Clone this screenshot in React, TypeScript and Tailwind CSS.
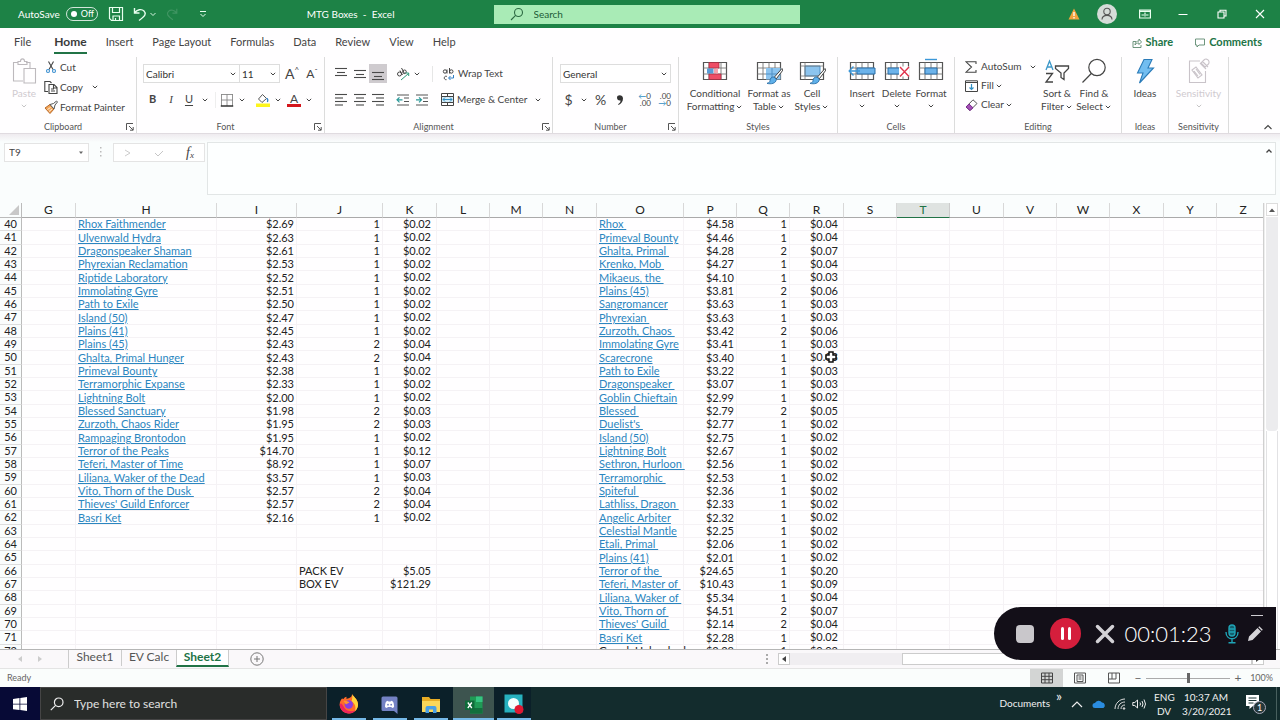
import React from "react";

type Kids = { children?: React.ReactNode };

/* ---------- small drawing helpers ---------- */

function Chev({ className = "" }: { className?: string }) {
  return (
    <svg aria-hidden="true" viewBox="0 0 8 8" className={`h-2 w-2 shrink-0 ${className}`} fill="none" stroke="#444" strokeWidth="1">
      <path d="M1.8 2.8 4 5l2.2-2.2" />
    </svg>
  );
}

function Btn({ label, className = "", children }: Kids & { label?: string; className?: string }) {
  return (
    <button type="button" aria-label={label} className={`flex shrink-0 items-center justify-center ${className}`}>
      {children}
    </button>
  );
}

function Drop({ label, className = "w-3.5" }: { label: string; className?: string }) {
  return (
    <Btn label={label} className={`h-full ${className}`}>
      <Chev />
    </Btn>
  );
}

function Lines({ rows }: { rows: [number, number, number][] }) {
  return (
    <svg aria-hidden="true" viewBox="0 0 14 14" className="h-3.5 w-3.5" stroke="#4a4a4a" strokeWidth="1.1">
      {rows.map(([x1, x2, y], i) => (
        <path key={i} d={`M${x1} ${y}H${x2}`} />
      ))}
    </svg>
  );
}

function Group({ name, launcher, className, children }: Kids & { name: string; launcher?: boolean; className: string }) {
  return (
    <section aria-label={name} className={`flex shrink-0 flex-col border-r border-[#dcdcdc] ${className}`}>
      <div className="flex flex-1">{children}</div>
      <div className="flex h-4 items-center pt-[3px] text-[9px] text-[#555]">
        <span className="flex-1 text-center">{name}</span>
        {launcher && (
          <Btn label={`${name} settings`} className="mr-0.5 h-3 w-2">
            <svg aria-hidden="true" viewBox="0 0 8 8" className="h-2 w-2" fill="none" stroke="#555">
              <path d="M.5 7V.5H7M3 3l4 4M7.2 4v3.2H4" />
            </svg>
          </Btn>
        )}
      </div>
    </section>
  );
}

function Big({ lines, chev, className, dim, children }: Kids & { lines: string[]; chev?: boolean; className: string; dim?: boolean }) {
  return (
    <button
      type="button"
      className={`flex shrink-0 flex-col items-center self-start whitespace-nowrap text-[10px] leading-[13px] ${dim ? "text-[#cfcacf]" : "text-[#444]"} ${className}`}
    >
      <span className="mb-[3px] flex h-[27px] items-center">{children}</span>
      {lines.map((l, i) => (
        <span key={l} className="flex items-center gap-px">
          {l}
          {chev && i > 0 && <Chev />}
        </span>
      ))}
      {chev && lines.length === 1 && <Chev className={dim ? "mt-0.5 opacity-30" : "mt-0.5"} />}
    </button>
  );
}

/* Small worksheet grid shared by the Styles and Cells icons */
function Sheet({ children, cols = true }: Kids & { cols?: boolean }) {
  return (
    <svg aria-hidden="true" viewBox="0 0 28 28" className="h-7 w-7" fill="none">
      <path d="M2.5 5.500h23v17h-23z" fill="#fff" stroke="#555" strokeWidth="1.200" />
      {cols && <path d="M8 5.500v17M14 5.500v17M20 5.500v17M2.500 11h23M2.500 17h23" stroke="#777" strokeWidth=".9" />}
      {children}
    </svg>
  );
}

function Brush() {
  return (
    <g>
      <path d="M27 11.500 19.500 20l1.800 1.800L28 13z" fill="#fff" stroke="#444" strokeWidth="1" />
      <path d="M19 20c-2.500-.2-4 1.500-4 3.500 0 1.500-1.200 2.500-3 2.800 4 1.200 9 .2 9.300-3.900z" fill="#5fb0ea" stroke="#2b6fa8" strokeWidth=".9" />
    </g>
  );
}

/* ---------- title bar ---------- */

function TitleBar() {
  return (
    <header className="flex h-7 shrink-0 items-center bg-[#1d8246] text-white">
      <div className="flex flex-1 items-center pl-[18px] text-[10px]">
        <span>AutoSave</span>
        <button type="button" role="switch" aria-checked="false" aria-label="AutoSave" className="ml-1.5 flex h-3.5 w-8 items-center gap-1 rounded-full border border-white/80 pl-1 text-[9px]">
          <span className="h-1.5 w-1.5 rounded-full bg-white" />
          Off
        </button>
        <Btn label="Save" className="ml-2.5">
          <svg aria-hidden="true" viewBox="0 0 16 16" className="h-4 w-4" fill="none" stroke="#e9fff0" strokeWidth="1.200">
            <path d="M1.500 1.500h13v13h-11l-2-2zM4.500 1.500v5h7v-5M5 14.500v-4.500h6.500v4.500M7.500 14.500v-2.500" />
          </svg>
        </Btn>
        <Btn label="Undo" className="ml-2">
          <svg aria-hidden="true" viewBox="0 0 16 16" className="h-4 w-4" fill="none" stroke="#e9fff0" strokeWidth="1.400">
            <path d="M2.500 2v5h5M2.500 7C5 3.500 9.500 2.500 12 5s1.500 5-5 9.500" />
          </svg>
        </Btn>
        <svg aria-hidden="true" viewBox="0 0 8 8" className="ml-px h-2 w-2" fill="none" stroke="#d5f5df">
          <path d="M1.500 3 4 5.500 6.500 3" />
        </svg>
        <Btn label="Redo" className="ml-2 opacity-15">
          <svg aria-hidden="true" viewBox="0 0 16 16" className="h-3.5 w-3.5" fill="none" stroke="#fff" strokeWidth="1.300">
            <path d="M13.500 2v5h-5M13.500 7C11 3.500 6.500 2.500 4 5s-1.500 5 5 9.500" />
          </svg>
        </Btn>
        <Btn label="Customize toolbar" className="ml-5">
          <svg aria-hidden="true" viewBox="0 0 8 8" className="h-2 w-2" fill="none" stroke="#e9fff0">
            <path d="M1 1.500h6M1.500 4 4 6.500 6.500 4" />
          </svg>
        </Btn>
        <span className="ml-auto mr-[89px] whitespace-pre">MTG Boxes  -  Excel</span>
      </div>
      <label className="ml-2.5 flex h-[19px] w-[306px] items-center bg-[#a9ebb6]">
        <svg aria-hidden="true" viewBox="0 0 14 14" className="ml-4 h-3.5 w-3.5" fill="none" stroke="#2c6a42" strokeWidth="1.100">
          <circle cx="8.500" cy="5.500" r="4" />
          <path d="M5.600 8.400 1 13" />
        </svg>
        <input aria-label="Search" placeholder="Search" className="ml-2.5 w-40 bg-transparent text-[10px] text-[#215c37] outline-none placeholder:text-[#215c37]" />
      </label>
      <div className="flex flex-1 items-center justify-end pr-[15px]">
        <svg aria-hidden="true" viewBox="0 0 12 12" className="mr-[17px] h-3 w-3">
          <path d="M6 .5 11.500 11.500H.5z" fill="#f3a33c" />
          <path d="M6 4v4M6 9v1.500" stroke="#fff" strokeWidth="1.300" />
        </svg>
        <Btn label="Account" className="mr-[22px] h-5 w-5 rounded-full bg-[#d5dcd8]">
          <svg aria-hidden="true" viewBox="0 0 16 16" className="h-4 w-4" fill="none" stroke="#555" strokeWidth="1.100">
            <circle cx="8" cy="5.500" r="3.200" />
            <path d="M3 13.500c.3-5.500 9.700-5.500 10 0" />
          </svg>
        </Btn>
        <Btn label="Ribbon display options" className="mr-[27px]">
          <svg aria-hidden="true" viewBox="0 0 12 10" className="h-2.5 w-3" fill="none" stroke="#eafff0" strokeWidth="1.200">
            <path d="M.6 1.200h10.800v7.800H.6zM.6 2.500h10.800M2.500 6h2.500M7 6h2.500M6 3.500v4" />
          </svg>
        </Btn>
        <Btn label="Minimize" className="mr-[29px]">
          <svg aria-hidden="true" viewBox="0 0 10 10" className="h-2.5 w-2.5" stroke="#fff">
            <path d="M.5 5.500h9" />
          </svg>
        </Btn>
        <Btn label="Restore" className="mr-7">
          <svg aria-hidden="true" viewBox="0 0 10 10" className="h-2.5 w-2.5" fill="none" stroke="#fff" strokeWidth="1.100">
            <path d="M1 3h6v6H1zM3 3V1.200h6V7H7" />
          </svg>
        </Btn>
        <Btn label="Close">
          <svg aria-hidden="true" viewBox="0 0 10 10" className="h-2.5 w-2.5" stroke="#fff" strokeWidth="1.100">
            <path d="m1 1 8 8M9 1 1 9" />
          </svg>
        </Btn>
      </div>
    </header>
  );
}

/* ---------- ribbon ---------- */

const TABS = ["File", "Home", "Insert", "Page Layout", "Formulas", "Data", "Review", "View", "Help"];

function Tabs() {
  return (
    <nav className="flex h-[29px] shrink-0 items-center text-[11px] text-[#444]">
      <div className="flex items-center gap-[19px] pl-3.5">
        {TABS.map((t) => (
          <button
            key={t}
            type="button"
            className={t === "Home" ? "ml-1 border-b-2 border-[#217346] text-[12px] font-bold leading-5 text-[#3a3a3a]" : "border-b-2 border-transparent leading-5"}
          >
            {t}
          </button>
        ))}
      </div>
      <div className="ml-auto flex items-center gap-[22px] pr-[18px] font-bold text-[#217346]">
        <button type="button" className="flex items-center gap-1">
          <svg aria-hidden="true" viewBox="0 0 10 10" className="h-2.5 w-2.5" fill="none" stroke="#5f8a70" strokeWidth=".9">
            <path d="M4 3.500H1v6h8V7M3 7c0-3 2-4 4-4V1l2.500 3L7 6.500V5C5 5 4 5.500 3 7z" />
          </svg>
          Share
        </button>
        <button type="button" className="flex items-center gap-1">
          <svg aria-hidden="true" viewBox="0 0 10 10" className="h-2.5 w-2.5" fill="none" stroke="#5f8a70" strokeWidth=".9">
            <path d="M.5 1h9v6H4L2 9V7H.5z" />
          </svg>
          Comments
        </button>
      </div>
    </nav>
  );
}

function Field({ label, value, className }: { label: string; value: string; className: string }) {
  return (
    <span className={`grid h-[19px] shrink-0 items-center border border-[#ddd] bg-white ${className}`}>
      <select aria-label={label} defaultValue={value} className="col-start-1 row-start-1 appearance-none bg-transparent pl-0.5 text-[10px] leading-4 text-[#333] outline-none">
        <option>{value}</option>
      </select>
      <Chev className="pointer-events-none col-start-1 row-start-1 mr-0.5 justify-self-end" />
    </span>
  );
}

function Ribbon() {
  return (
    <div className="flex h-[77px] shrink-0 border-b border-[#e0dbe0] text-[10px] text-[#444]">
      <Group name="Clipboard" launcher className="w-[137px]">
        <Big lines={["Paste"]} chev dim className="w-8 pl-4">
          <svg aria-hidden="true" viewBox="0 0 26 28" className="h-7 w-[26px]" fill="none" stroke="#bdb9bd" strokeWidth="1.100">
            <path d="M12 24H2.500V5.500H7M15 5.500h4V11M7 7.500V4.500h2.500c0-3.500 4-3.500 4 0H16v3zM13 11.500h11.500V26H13z" />
          </svg>
        </Big>
        <div className="flex flex-col pl-3">
          <Btn className="h-5 gap-0.5 self-start">
            <svg aria-hidden="true" viewBox="0 0 14 14" className="h-3.5 w-3.5" fill="none" strokeWidth="1.100">
              <path d="M4.500 1.500 9 9.500M9.500 1.500 5 9.500" stroke="#444" />
              <circle cx="4" cy="11" r="1.500" stroke="#3a8fd0" />
              <circle cx="10" cy="11" r="1.500" stroke="#3a8fd0" />
            </svg>
            Cut
          </Btn>
          <div className="flex h-5 items-center">
            <Btn className="gap-0.5">
              <svg aria-hidden="true" viewBox="0 0 14 14" className="h-3.5 w-3.5" fill="none" stroke="#444" strokeWidth="1.100">
                <path d="M4 11.500H.8V1.500H6l1.500 1.500M5 4.500h5l3 3v6H5zM9.500 4.800V8H13M7 9h3M7 11h4" />
              </svg>
              Copy
            </Btn>
            <Drop label="Copy options" className="ml-1.5 w-3" />
          </div>
          <Btn className="h-5 gap-0.5">
            <svg aria-hidden="true" viewBox="0 0 14 14" className="h-3.5 w-3.5">
              <path d="m1 8 5-3.500L10 9l-4 4.500z" fill="#f2a65a" stroke="#b8692a" />
              <path d="m6 4.500 3.500-1L12.500 1l1 1-2.500 3L10 9z" fill="#fff" stroke="#555" />
              <path d="m3.500 9.500 3-2M5 11.500l3-2.500" stroke="#fff" strokeWidth=".8" />
            </svg>
            Format Painter
          </Btn>
        </div>
      </Group>

      <Group name="Font" launcher className="w-[188px]">
        <div className="flex flex-col gap-[7px] pl-1.5 pt-[7px]">
          <div className="flex items-center">
            <Field label="Font" value="Calibri" className="w-[97px]" />
            <Field label="Font size" value="11" className="-ml-px w-[41px]" />
            <Btn label="Increase font size" className="ml-1 w-4 text-[14px] leading-4">
              A<span className="mb-2 text-[8px] leading-none">^</span>
            </Btn>
            <Btn label="Decrease font size" className="ml-1 w-4 text-[12px] leading-4">
              A<span className="mb-1 text-[8px] leading-none">ˇ</span>
            </Btn>
          </div>
          <div className="flex h-[19px] items-center text-[11px]">
            <Btn label="Bold" className="w-[19px] font-bold">B</Btn>
            <Btn label="Italic" className="w-[18px] font-['Liberation_Serif',serif] italic">I</Btn>
            <Btn label="Underline" className="w-[18px] underline underline-offset-2">U</Btn>
            <Drop label="Underline style" />
            <span className="mx-[3px] h-4 border-l border-[#eee]" />
            <Btn label="Borders" className="w-4">
              <svg aria-hidden="true" viewBox="0 0 14 14" className="h-3.5 w-3.5" fill="none">
                <path d="M1 1.500h12M1.500 1v12M12.500 1v12M7 1v12M1 7h12" stroke="#888" strokeWidth=".9" />
                <path d="M.8 13h12.400" stroke="#333" strokeWidth="1.500" />
              </svg>
            </Btn>
            <Drop label="Border style" />
            <Btn label="Fill color" className="ml-1.5 w-4">
              <svg aria-hidden="true" viewBox="0 0 14 14" className="h-3.5 w-3.5" fill="none">
                <path d="m2.500 6 4-4.500 4 4-4.500 4z" stroke="#555" />
                <path d="M10.500 5.500c1.500 0 1.500 2 .9 3.500" stroke="#2f7fc4" strokeWidth="1.300" />
                <path d="M0 10.500h14V14H0z" fill="#fdf51c" />
              </svg>
            </Btn>
            <Drop label="Fill color options" className="w-[13px]" />
            <Btn label="Font color" className="w-5 flex-col leading-none">
              <span className="text-[12px] leading-[11px]">A</span>
              <span className="h-[3px] w-3.5 bg-[#d4151c]" />
            </Btn>
            <Drop label="Font color options" className="w-2.5" />
          </div>
        </div>
      </Group>

      <Group name="Alignment" launcher className="w-[228px]">
        <div className="flex flex-col gap-[7px] pl-1.5 pt-[7px]">
          <div className="flex h-[19px] items-center">
            <Btn label="Top align" className="w-[19px]"><Lines rows={[[1, 13, 1.5], [3, 11, 5.5], [1, 13, 8.5]]} /></Btn>
            <Btn label="Middle align" className="w-[19px]"><Lines rows={[[1, 13, 3.5], [3, 11, 7.5], [1, 13, 10.5]]} /></Btn>
            <Btn label="Bottom align" className="h-[19px] w-[18px] bg-[#cfcbcf]"><Lines rows={[[1, 13, 5.5], [3, 11, 9.5], [1, 13, 12.5]]} /></Btn>
            <Btn label="Orientation" className="ml-2 w-4">
              <svg aria-hidden="true" viewBox="0 0 14 14" className="h-3.5 w-3.5" fill="none" stroke="#444">
                <circle cx="3.500" cy="7" r="2" />
                <path d="M4 3.500 6.500 8M5.500 1 8.500 6.500" />
                <circle cx="8.500" cy="4.800" r="1.800" />
                <path d="m5 13 7.500-6.500M9.500 6h3.200v3" stroke="#2b9a7b" />
              </svg>
            </Btn>
            <Drop label="Orientation options" className="w-3" />
            <span className="mx-[9px] h-4 border-l border-[#e6e6e6]" />
            <Btn className="gap-1">
              <svg aria-hidden="true" viewBox="0 0 12 14" className="h-3.5 w-3" fill="none" stroke="#444">
                <circle cx="3" cy="4.500" r="1.700" />
                <path d="M5 2.500v4M7.500 1v5.500M5 9.500c-3-1.500-4 3.500-.5 3.200" />
                <circle cx="9.300" cy="4.500" r="1.700" />
                <path d="M11.500 8v3H7M8.500 9 6.500 11l2 2" stroke="#2f7fc4" />
              </svg>
              Wrap Text
            </Btn>
          </div>
          <div className="flex h-[19px] items-center">
            <Btn label="Align left" className="w-[19px]"><Lines rows={[[1, 13, 1.5], [1, 9, 5], [1, 13, 8.5], [1, 9, 12]]} /></Btn>
            <Btn label="Center" className="w-[19px]"><Lines rows={[[1, 13, 1.5], [3, 11, 5], [1, 13, 8.5], [3, 11, 12]]} /></Btn>
            <Btn label="Align right" className="w-[18px]"><Lines rows={[[1, 13, 1.5], [5, 13, 5], [1, 13, 8.5], [5, 13, 12]]} /></Btn>
            <Btn label="Decrease indent" className="ml-1.5 w-[19px]">
              <svg aria-hidden="true" viewBox="0 0 14 14" className="h-3.5 w-3.5" fill="none" stroke="#555">
                <path d="M1 2h12M8 5h5M8 8.500h5M1 12h12" />
                <path d="M6.500 6.800H1M3.500 4.300 1 6.800l2.500 2.500" stroke="#2b9a9a" strokeWidth="1.200" />
              </svg>
            </Btn>
            <Btn label="Increase indent" className="w-[19px]">
              <svg aria-hidden="true" viewBox="0 0 14 14" className="h-3.5 w-3.5" fill="none" stroke="#555">
                <path d="M1 2h12M8 5h5M8 8.500h5M1 12h12" />
                <path d="M1 6.800h5.500M4 4.300l2.500 2.500L4 9.300" stroke="#2b9a9a" strokeWidth="1.200" />
              </svg>
            </Btn>
            <Btn className="ml-2.5 gap-[3px]">
              <svg aria-hidden="true" viewBox="0 0 13 13" className="h-[13px] w-[13px]" fill="none" stroke="#444">
                <path d="M.5.5h12v12H.5z" />
                <path d="M.5 3.500h12v6H.5z" fill="#d5ecf8" />
                <path d="M6.500.5v3M6.500 9.500v3" />
                <path d="M2 6.500h9M4 4.500l-2 2 2 2M9 4.500l2 2-2 2" stroke="#2f8fc4" />
              </svg>
              Merge &amp; Center
            </Btn>
            <Drop label="Merge options" className="ml-1 w-3.5" />
          </div>
        </div>
      </Group>

      <Group name="Number" launcher className="w-[126px]">
        <div className="flex flex-col gap-[7px] pl-[7px] pt-[7px]">
          <Field label="Number format" value="General" className="w-[111px]" />
          <div className="flex h-[19px] items-center text-[14px]">
            <Btn label="Accounting format" className="w-[17px]">$</Btn>
            <Drop label="Accounting options" />
            <Btn label="Percent style" className="ml-0.5 w-[15px]">%</Btn>
            <Btn label="Comma style" className="ml-[5px] w-3.5">
              <svg aria-hidden="true" viewBox="0 0 8 12" className="h-3 w-2">
                <path d="M1 3.500C1 .5 7 .3 7 4.500c0 3-2 5.500-4.500 6.500l-.4-.8C4 9 4.500 8 4.500 6.500 2.500 7 1 5.500 1 3.500z" fill="#333" />
              </svg>
            </Btn>
            <Btn label="Increase decimal" className="ml-2 w-4 flex-col text-[8px] leading-[7px]">
              <span className="self-end"><span className="text-[#2f8fc4]">←</span>0</span>
              <span className="self-end">.00</span>
            </Btn>
            <Btn label="Decrease decimal" className="ml-1 w-4 flex-col text-[8px] leading-[7px]">
              <span className="self-end">.00</span>
              <span className="self-end"><span className="text-[#2f8fc4]">→</span>0</span>
            </Btn>
          </div>
        </div>
      </Group>

      <Group name="Styles" className="w-[159px]">
        <Big lines={["Conditional", "Formatting"]} chev className="ml-1.5 w-[60px]">
          <Sheet>
            <path d="M8 5.500h10V11H8zM8 17h12v5.500H8z" fill="#ee4d66" stroke="#a5263c" strokeWidth=".7" />
            <path d="M6 11.500h6.500v5H6z" fill="#5b9bd5" />
            <path d="M13 11.500h4v5h-4z" fill="#f7a3ae" />
          </Sheet>
        </Big>
        <Big lines={["Format as", "Table"]} chev className="w-12">
          <Sheet>
            <path d="M11 11h14.500v11.500H11z" fill="#8cc4ef" />
            <path d="M17 11v11M11 17h14" stroke="#4e8fc4" />
            <Brush />
          </Sheet>
        </Big>
        <Big lines={["Cell", "Styles"]} chev className="w-[38px]">
          <Sheet cols={false}>
            <path d="M7 9h15v10H7z" fill="#8cc4ef" stroke="#4e8fc4" />
            <path d="M7 5.500v17M2.500 9h23M2.500 19h20" stroke="#777" strokeWidth=".8" />
            <Brush />
          </Sheet>
        </Big>
      </Group>

      <Group name="Cells" className="w-[117px]">
        <Big lines={["Insert"]} chev className="ml-[7px] w-[34px]">
          <Sheet>
            <path d="M9 11h18v6H9z" fill="#6cb3ea" stroke="#2b6fa8" />
            <path d="M12 14H1.500M5.500 9.500 1.200 14l4.300 4.500" stroke="#3b97d8" strokeWidth="1.400" />
          </Sheet>
        </Big>
        <Big lines={["Delete"]} chev className="w-[35px]">
          <Sheet>
            <path d="M5 11h13v6H5z" fill="#6cb3ea" stroke="#2b6fa8" />
            <path d="M16 9.500h10v10H16z" fill="#fff" />
            <path d="m17 10 9 9.500M26 10l-9 9.500" stroke="#e0364f" strokeWidth="1.400" />
          </Sheet>
        </Big>
        <Big lines={["Format"]} chev className="w-[34px]">
          <Sheet>
            <path d="M8 11h12v6H8z" fill="#6cb3ea" stroke="#2b6fa8" />
            <path d="M8 2.500h12" stroke="#3b97d8" strokeWidth="1.400" />
          </Sheet>
        </Big>
      </Group>

      <Group name="Editing" className="w-[167px]">
        <div className="flex w-[82px] flex-col pl-2.5">
          <div className="flex h-[19px] items-center">
            <Btn className="gap-1">
              <svg aria-hidden="true" viewBox="0 0 12 12" className="h-3 w-3" fill="none" stroke="#444" strokeWidth="1.100">
                <path d="M11 3V.8H1L6.500 6 1 11.200h10V9" />
              </svg>
              AutoSum
            </Btn>
            <Drop label="AutoSum options" className="ml-1.5 w-3" />
          </div>
          <Btn className="h-[19px] gap-[3px] self-start">
            <svg aria-hidden="true" viewBox="0 0 13 12" className="h-3 w-[13px]" fill="none" stroke="#444">
              <path d="M.5.8h12v10.700H.5zM.5 2.500h12" />
              <path d="M6.500 4v5.500M4.500 7.500l2 2 2-2" stroke="#2f8fc4" strokeWidth="1.200" />
            </svg>
            Fill
            <Chev className="-ml-0.5" />
          </Btn>
          <Btn className="h-[19px] gap-[3px] self-start">
            <svg aria-hidden="true" viewBox="0 0 13 12" className="h-3 w-[13px]" fill="none">
              <path d="M1 8 8 .8 12 4.500 5 11.500z" fill="#fff" stroke="#555" />
              <path d="m1 8 3-3 4 3.800-3 2.700z" fill="#a34fb5" stroke="#7b2f8e" />
            </svg>
            Clear
            <Chev className="-ml-0.5" />
          </Btn>
        </div>
        <Big lines={["Sort &", "Filter"]} chev className="w-10">
          <svg aria-hidden="true" viewBox="0 0 26 26" className="h-[26px] w-[26px]" fill="none" strokeWidth="1.300">
            <path d="M2 12 5.500 3 9 12M3.200 9h4.600" stroke="#3b97c8" />
            <path d="M2 15.500h6.500L2 24h7" stroke="#444" />
            <path d="M11.500 8h13v2.500L20 15v6.500l-3-2V15l-5.500-4.500z" stroke="#444" />
          </svg>
        </Big>
        <Big lines={["Find &", "Select"]} chev className="w-[34px]">
          <svg aria-hidden="true" viewBox="0 0 26 26" className="h-[26px] w-[26px]" fill="none" stroke="#444" strokeWidth="1.200">
            <circle cx="16" cy="9.500" r="8.200" />
            <path d="M10.300 15.500 1.500 24.500" />
          </svg>
        </Big>
      </Group>

      <Group name="Ideas" className="w-[47px]">
        <Big lines={["Ideas"]} className="w-[46px]">
          <svg aria-hidden="true" viewBox="0 0 20 26" className="h-[26px] w-5">
            <path d="M9 1.500h8L13 10h5.500L4.500 25l3.500-10H2.500z" fill="#72bdf0" stroke="#2b7bb8" strokeWidth="1.100" />
          </svg>
        </Big>
      </Group>

      <Group name="Sensitivity" className="w-[60px]">
        <Big lines={["Sensitivity"]} chev dim className="w-[59px]">
          <svg aria-hidden="true" viewBox="0 0 24 26" className="h-[26px] w-6" fill="none" stroke="#c9c3c9" strokeWidth="1.100">
            <path d="M13 3H2.500v21.500h16V13" />
            <path d="m5 12 4-3 6 8-4 3zM7 13l4 5M9 11l4 5.500M13 5l6 6M15.500 3.500 21 9M17 2c3-3 7 2 4 4.500l-3 2.500-4-4z" />
          </svg>
        </Big>
      </Group>
      <div className="flex flex-1 items-end justify-end pb-px pr-[7px]">
        <Btn label="Collapse ribbon">
          <svg aria-hidden="true" viewBox="0 0 10 10" className="h-2.5 w-2.5" fill="none" stroke="#444" strokeWidth="1.100">
            <path d="m1.500 7 3.500-3.500L8.500 7" />
          </svg>
        </Btn>
      </div>
    </div>
  );
}

function FormulaBar() {
  return (
    <div className="flex h-[69px] shrink-0 flex-col bg-[#fafdfd] text-[#444]">
      <div className="h-2 shrink-0 bg-linear-to-b from-[#efebef] to-[#fafdfd]" />
      <div className="flex flex-1 pb-2">
        <label className="ml-1 mt-px flex h-[19px] w-[85px] items-center border border-[#e4e4e4] bg-white px-1">
          <input aria-label="Name box" defaultValue="T9" className="min-w-0 flex-1 bg-transparent text-[10px] outline-none" />
          <svg aria-hidden="true" viewBox="0 0 6 4" className="h-1 w-1.5">
            <path d="M1 .5h4L3 3z" fill="#666" />
          </svg>
        </label>
        <svg aria-hidden="true" viewBox="0 0 4 12" className="ml-2.5 mt-1 h-3 w-1" fill="#bbb">
          <path d="M1 1h1.500v1.500H1zM1 5h1.500v1.500H1zM1 9h1.500v1.500H1z" />
        </svg>
        <div className="ml-2.5 mt-px flex h-[19px] w-[92px] items-center justify-between border border-[#e4e4e4] bg-white px-2.5">
          <Btn label="Cancel">
            <svg aria-hidden="true" viewBox="0 0 8 8" className="h-2 w-2" fill="none" stroke="#ccc"><path d="m1 1 5 3-5 3" /></svg>
          </Btn>
          <Btn label="Enter">
            <svg aria-hidden="true" viewBox="0 0 8 8" className="h-2 w-2" fill="none" stroke="#c6c6c6"><path d="m0 4 3 3 5-5" /></svg>
          </Btn>
          <Btn label="Insert function" className="font-['Liberation_Serif',serif] text-[14px] italic leading-4">
            f<span className="mt-1 text-[9px]">x</span>
          </Btn>
        </div>
        <div className="ml-0.5 mr-1 flex flex-1 items-start border border-[#e2e6e6] bg-[#fdffff]">
          <textarea aria-label="Formula" className="h-full flex-1 resize-none bg-transparent outline-none" />
          <Btn label="Collapse formula bar" className="mr-0.5 mt-1">
            <svg aria-hidden="true" viewBox="0 0 8 8" className="h-2 w-2" fill="none" stroke="#444" strokeWidth="1.300">
              <path d="M1.500 5.500 4 3l2.500 2.500" />
            </svg>
          </Btn>
        </div>
      </div>
    </div>
  );
}

/* ---------- worksheet ---------- */

const COLS: [string, string][] = [
  ["G", "w-[54px]"], ["H", "w-[141px]"], ["I", "w-[80px]"], ["J", "w-[86px]"], ["K", "w-[54px]"],
  ["L", "w-[53px]"], ["M", "w-[53px]"], ["N", "w-[54px]"], ["O", "w-[87px]"], ["P", "w-[53px]"],
  ["Q", "w-[53px]"], ["R", "w-[54px]"], ["S", "w-[53px]"], ["T", "w-[53px]"], ["U", "w-[54px]"],
  ["V", "w-[53px]"], ["W", "w-[53px]"], ["X", "w-[54px]"], ["Y", "w-[53px]"], ["Z", "w-[53px]"],
];

type Entry = [string, string, number, string];

const LEFT: Entry[] = [
  ["Rhox Faithmender", "$2.69", 1, "$0.02"],
  ["Ulvenwald Hydra", "$2.63", 1, "$0.02"],
  ["Dragonspeaker Shaman", "$2.61", 1, "$0.02"],
  ["Phyrexian Reclamation", "$2.53", 1, "$0.02"],
  ["Riptide Laboratory", "$2.52", 1, "$0.02"],
  ["Immolating Gyre", "$2.51", 1, "$0.02"],
  ["Path to Exile", "$2.50", 1, "$0.02"],
  ["Island (50)", "$2.47", 1, "$0.02"],
  ["Plains (41)", "$2.45", 1, "$0.02"],
  ["Plains (45)", "$2.43", 2, "$0.04"],
  ["Ghalta, Primal Hunger", "$2.43", 2, "$0.04"],
  ["Primeval Bounty", "$2.38", 1, "$0.02"],
  ["Terramorphic Expanse", "$2.33", 1, "$0.02"],
  ["Lightning Bolt", "$2.00", 1, "$0.02"],
  ["Blessed Sanctuary", "$1.98", 2, "$0.03"],
  ["Zurzoth, Chaos Rider", "$1.95", 2, "$0.03"],
  ["Rampaging Brontodon", "$1.95", 1, "$0.02"],
  ["Terror of the Peaks", "$14.70", 1, "$0.12"],
  ["Teferi, Master of Time", "$8.92", 1, "$0.07"],
  ["Liliana, Waker of the Dead", "$3.57", 1, "$0.03"],
  ["Vito, Thorn of the Dusk ", "$2.57", 2, "$0.04"],
  ["Thieves' Guild Enforcer", "$2.57", 2, "$0.04"],
  ["Basri Ket", "$2.16", 1, "$0.02"],
];

const RIGHT: Entry[] = [
  ["Rhox ", "$4.58", 1, "$0.04"],
  ["Primeval Bounty", "$4.46", 1, "$0.04"],
  ["Ghalta, Primal ", "$4.28", 2, "$0.07"],
  ["Krenko, Mob ", "$4.27", 1, "$0.04"],
  ["Mikaeus, the ", "$4.10", 1, "$0.03"],
  ["Plains (45)", "$3.81", 2, "$0.06"],
  ["Sangromancer", "$3.63", 1, "$0.03"],
  ["Phyrexian ", "$3.63", 1, "$0.03"],
  ["Zurzoth, Chaos ", "$3.42", 2, "$0.06"],
  ["Immolating Gyre", "$3.41", 1, "$0.03"],
  ["Scarecrone", "$3.40", 1, "$0.03"],
  ["Path to Exile", "$3.22", 1, "$0.03"],
  ["Dragonspeaker ", "$3.07", 1, "$0.03"],
  ["Goblin Chieftain", "$2.99", 1, "$0.02"],
  ["Blessed ", "$2.79", 2, "$0.05"],
  ["Duelist's ", "$2.77", 1, "$0.02"],
  ["Island (50)", "$2.75", 1, "$0.02"],
  ["Lightning Bolt", "$2.67", 1, "$0.02"],
  ["Sethron, Hurloon ", "$2.56", 1, "$0.02"],
  ["Terramorphic ", "$2.53", 1, "$0.02"],
  ["Spiteful ", "$2.36", 1, "$0.02"],
  ["Lathliss, Dragon ", "$2.33", 1, "$0.02"],
  ["Angelic Arbiter", "$2.32", 1, "$0.02"],
  ["Celestial Mantle", "$2.25", 1, "$0.02"],
  ["Etali, Primal ", "$2.06", 1, "$0.02"],
  ["Plains (41)", "$2.01", 1, "$0.02"],
  ["Terror of the ", "$24.65", 1, "$0.20"],
  ["Teferi, Master of ", "$10.43", 1, "$0.09"],
  ["Liliana, Waker of ", "$5.34", 1, "$0.04"],
  ["Vito, Thorn of ", "$4.51", 2, "$0.07"],
  ["Thieves' Guild ", "$2.14", 2, "$0.04"],
  ["Basri Ket", "$2.28", 1, "$0.02"],
  ["Garruk Unleashed", "$2.28", 1, "$0.02"],
];

const CELL = "whitespace-pre border-b border-r border-[#f5f2f5] p-0";

function cellOf(col: string, i: number) {
  const l = LEFT[i];
  const r = RIGHT[i];
  const link = (t: string) =>
    t.startsWith("Garruk") ? t : (
      <a href="#card" className="text-[#2b86c0] underline decoration-1 underline-offset-1">{t}</a>
    );
  switch (col) {
    case "H": return l && link(l[0]);
    case "I": return l?.[1];
    case "J": return l ? l[2] : i === 26 ? "PACK EV" : i === 27 ? "BOX EV" : null;
    case "K": return l ? l[3] : i === 26 ? "$5.05" : i === 27 ? "$121.29" : null;
    case "O": return link(r[0]);
    case "P": return r[1];
    case "Q": return r[2];
    case "R": return r[3];
    default: return null;
  }
}

function cellAlign(col: string, i: number) {
  if (col === "K" || col === "R") return "pr-[5px] text-right align-top";
  if (col === "J" && i >= 26) return "pl-0.5 text-left align-top";
  if (col === "H" || col === "O") return "pl-0.5 text-left align-bottom";
  return "pr-0.5 text-right align-bottom";
}

function Grid() {
  return (
    <div className="flex min-h-0 flex-1 overflow-hidden bg-[#fafdfd]">
      <div className="min-w-0 flex-1 overflow-hidden border-r border-[#d0d0d0]">
        <table className="w-[1266px] table-fixed border-separate border-spacing-0 bg-[#fffeff] text-[11px] leading-3 text-[#222]">
          <colgroup>
            <col className="w-[22px]" />
            {COLS.map(([c, w]) => (
              <col key={c} className={w} />
            ))}
          </colgroup>
          <thead>
            <tr className="h-[15px] text-[12px]">
              <th className="border-b border-r border-[#bbb] bg-[#fafdfd] p-0">
                <svg aria-hidden="true" viewBox="0 0 10 10" className="ml-auto mr-0.5 h-2.5 w-2.5">
                  <path d="M10 0v10H0z" fill="#c8c8c8" />
                </svg>
              </th>
              {COLS.map(([c]) => (
                <th
                  key={c}
                  scope="col"
                  className={`border-b border-r p-0 font-normal ${c === "T" ? "border-b-[#217346] border-r-[#ccc] bg-[#dfe3e1] text-[#217346]" : "border-b-[#aaa] border-r-[#d8d8d8] bg-[#fafdfd]"}`}
                >
                  {c}
                </th>
              ))}
            </tr>
          </thead>
          <tbody>
            {RIGHT.map((_, i) => (
              <tr key={i} className={i % 3 === 1 ? "h-3.5" : "h-[13px]"}>
                <th scope="row" className="border-b border-r border-b-[#ddd] border-r-[#bbb] bg-[#fafdfd] p-0 pr-1 text-right align-top font-normal">
                  {40 + i}
                </th>
                {COLS.map(([c]) => (
                  <td key={c} className={`${CELL} ${cellAlign(c, i)}`}>{cellOf(c, i)}</td>
                ))}
              </tr>
            ))}
          </tbody>
        </table>
      </div>
      <div className="flex w-4 flex-col items-center border-l border-[#eee] bg-white pr-px">
        <Btn label="Scroll up" className="h-[13px] w-3 border border-[#ddd] bg-white">
          <svg aria-hidden="true" viewBox="0 0 6 4" className="h-1 w-1.5"><path d="M0 4h6L3 .5z" fill="#555" /></svg>
        </Btn>
        <div className="mt-px h-[48%] w-3 rounded-b-sm bg-[#ececee]" />
        <div className="w-3 flex-1 border-x border-[#e2e2e4]" />
      </div>
    </div>
  );
}

function SheetTabs() {
  return (
    <div className="flex h-5 shrink-0 border-b border-t border-b-[#e4e4e4] border-t-[#b5b5b5] bg-[#faf8fa] text-[12px] text-[#555]">
      <div className="flex w-[69px] items-center gap-4 border-r border-[#ccc] pl-[18px]">
        <Btn label="Previous sheet"><svg aria-hidden="true" viewBox="0 0 4 6" className="h-1.5 w-1"><path d="M4 0v6L0 3z" fill="#ccc" /></svg></Btn>
        <Btn label="Next sheet"><svg aria-hidden="true" viewBox="0 0 4 6" className="h-1.5 w-1"><path d="M0 0v6l4-3z" fill="#ccc" /></svg></Btn>
      </div>
      <button type="button" className="w-[53px] self-start border-r border-[#ccc] pb-0.5 leading-[14px]">Sheet1</button>
      <button type="button" className="w-[54px] self-start pb-0.5 leading-[14px]">EV Calc</button>
      <button type="button" className="w-[53px] self-start border-x border-b-2 border-x-[#ccc] border-b-[#217346] bg-white pb-px font-bold leading-[14px] text-[#217346]">Sheet2</button>
      <Btn label="New sheet" className="ml-[21px]">
        <svg aria-hidden="true" viewBox="0 0 14 14" className="h-3.5 w-3.5" fill="none" stroke="#777">
          <circle cx="7" cy="7" r="6.200" />
          <path d="M7 4v6M4 7h6" />
        </svg>
      </Btn>
      <div className="ml-auto flex w-[514px] items-center">
        <svg aria-hidden="true" viewBox="0 0 2 10" className="h-2.5 w-0.5" fill="#aaa"><path d="M0 0h2v2H0zM0 4h2v2H0zM0 8h2v2H0z" /></svg>
        <Btn label="Scroll left" className="ml-2.5 h-3 w-3 border border-[#ccc] bg-white">
          <svg aria-hidden="true" viewBox="0 0 4 6" className="h-1.5 w-1"><path d="M4 0v6L0 3z" fill="#444" /></svg>
        </Btn>
        <div className="h-3 flex-1 bg-[#f0eef1]" />
        <div className="h-3 w-[350px] border border-[#ccc] bg-white" />
        <Btn label="Scroll right" className="mr-4 h-3 w-3 border border-[#ccc] bg-white">
          <svg aria-hidden="true" viewBox="0 0 4 6" className="h-1.5 w-1"><path d="M0 0v6l4-3z" fill="#444" /></svg>
        </Btn>
      </div>
    </div>
  );
}

function StatusBar() {
  return (
    <footer className="flex h-[18px] shrink-0 items-center bg-[#fafdfc] text-[9px] text-[#666]">
      <span className="pl-[7px]">Ready</span>
      <div className="ml-auto flex h-full items-center">
        <Btn label="Normal view" className="h-full w-[33px] bg-[#d3d5d4]">
          <svg aria-hidden="true" viewBox="0 0 12 12" className="h-3 w-3" fill="none" stroke="#444"><path d="M.5 1h11v10H.5zM4 1v10M8 1v10M.5 4.300h11M.5 7.700h11" /></svg>
        </Btn>
        <Btn label="Page layout view" className="h-full w-[34px]">
          <svg aria-hidden="true" viewBox="0 0 12 12" className="h-3 w-3" fill="none" stroke="#555"><path d="M.5 1h11v10H.5zM3 3h6v6.500H3zM4.500 5h3M4.500 7h3" /></svg>
        </Btn>
        <Btn label="Page break view" className="h-full w-[33px]">
          <svg aria-hidden="true" viewBox="0 0 12 12" className="h-3 w-3" fill="none" stroke="#555"><path d="M.5 1h11v10H.5zM4 1v6M8 1v6M.5 7H8" /></svg>
        </Btn>
        <Btn label="Zoom out" className="w-4 text-[12px]">−</Btn>
        <label className="grid w-[84px] items-center">
          <span aria-hidden="true" className="col-start-1 row-start-1 h-px bg-[#aaa]" />
          <span aria-hidden="true" className="col-start-1 row-start-1 h-2.5 w-[3px] justify-self-center bg-[#666]" />
          <input type="range" aria-label="Zoom" className="col-start-1 row-start-1 h-3 w-full opacity-0" />
        </label>
        <Btn label="Zoom in" className="w-4 text-[12px]">+</Btn>
        <span className="w-[34px] pr-[7px] text-right">100%</span>
      </div>
    </footer>
  );
}

/* ---------- desktop taskbar ---------- */

function TaskButton({ label, active, className = "w-[34px]", children }: Kids & { label: string; active?: boolean; className?: string }) {
  return (
    <button type="button" aria-label={label} className={`flex h-full flex-col items-center justify-end border-b-2 border-[#76b9e8] pb-1 ${active ? "bg-[#3d544f]" : ""} ${className}`}>
      {children}
    </button>
  );
}

function Taskbar() {
  return (
    <div className="flex h-[33px] shrink-0 items-center bg-[#132c2d] text-[#f0f0f0]">
      <Btn label="Start" className="h-full w-10 bg-[#070a36]">
        <svg aria-hidden="true" viewBox="0 0 14 14" className="h-3.5 w-3.5" fill="#fff">
          <path d="M0 2 6.500 1v5.700H0zM7.300.9 14 0v6.700H7.300zM0 7.500h6.500v5.600L0 12.200zM7.300 7.500H14V14l-6.700-.9z" />
        </svg>
      </Btn>
      <label className="flex h-full w-[287px] items-center border border-[#454545] bg-[#292c2a] pl-[9px]">
        <svg aria-hidden="true" viewBox="0 0 14 14" className="h-3.5 w-3.5" fill="none" stroke="#eee" strokeWidth="1.200">
          <circle cx="8.700" cy="5.300" r="4.300" />
          <path d="M5.600 8.400.8 13.200" />
        </svg>
        <input aria-label="Type here to search" placeholder="Type here to search" className="ml-2.5 w-52 bg-transparent text-[12px] outline-none placeholder:text-[#e0e0e0]" />
      </label>
      <div className="flex h-full gap-[7px] bg-[#0b2029] pl-[5px]">
        <TaskButton label="Firefox">
          <svg aria-hidden="true" viewBox="0 0 20 20" className="h-5 w-5">
            <path d="M13 0c1 2.500 5.500 4.500 6 10 .3 5-4 9.500-9 9.500S.7 15.500.7 10.500C.7 8 1.500 6 3 4.500L4.500 5c1-1.500 2-2 3-2.200L7.500 5C11 4 13 3 13 0z" fill="#ff6a2b" />
            <path d="M13 0c1 2.500 5.500 4.500 6 10 .2 3-1 5.500-3 7.300 1.500-5-.5-8-3.500-10C13.500 5 13.500 2 13 0z" fill="#ffd43a" />
            <path d="M.7 10.500c0 5 4.300 9 9.300 9 3 0 5-1 6.500-3-3 1.500-9 1-11-2.500S2 8 .7 10.500z" fill="#f0245b" />
            <circle cx="9.800" cy="10.500" r="4.200" fill="#8a3ee0" />
            <path d="M4.500 7c2-1 4 .5 6 1-1 1.500-3 1.500-3.500 2.500z" fill="#ff9a2b" />
          </svg>
        </TaskButton>
        <TaskButton label="Discord">
          <svg aria-hidden="true" viewBox="0 0 18 18" className="h-[18px] w-[18px]">
            <path d="M2 .5h13A1.500 1.500 0 0 1 16.500 2v16l-3.500-3H2A1.500 1.500 0 0 1 .5 13.500V2A1.500 1.500 0 0 1 2 .5z" fill="#7482c4" />
            <path d="M4 11c0-3 .7-5 1.200-5.500C6 5 7 4.800 7 4.800l.4.700h2.300l.4-.7s1 .2 1.800.7c.5.500 1.200 2.500 1.200 5.500-.8.800-2.100 1-2.100 1l-.6-.9H6.700l-.6.900S4.800 11.800 4 11z" fill="#fff" />
            <circle cx="7" cy="8.700" r=".9" fill="#7482c4" />
            <circle cx="10.200" cy="8.700" r=".9" fill="#7482c4" />
          </svg>
        </TaskButton>
        <TaskButton label="File Explorer">
          <svg aria-hidden="true" viewBox="0 0 20 18" className="h-[18px] w-5">
            <path d="M1 1h7l1.500 2H19v12H1z" fill="#e9ad25" />
            <path d="M1 5h18v11H1z" fill="#fbd75a" />
            <path d="M4.500 17V12a2 2 0 0 1 2-2h7a2 2 0 0 1 2 2v5h-3.500v-3.500H8V17z" fill="#4aa0e6" />
          </svg>
        </TaskButton>
        <TaskButton label="Excel" active className="-ml-0.5 w-[41px]">
          <svg aria-hidden="true" viewBox="0 0 18 18" className="h-[18px] w-[18px]">
            <path d="M5 .5h12.500v17H5z" fill="#1f9a55" />
            <path d="M11 .5h6.500V6H11z" fill="#35c481" />
            <path d="M5 12h12.500v5.500H5z" fill="#12703d" />
            <path d="M0 4.500h9.500v9.500H0z" fill="#0f6b3a" />
            <path d="m2.800 6.500 4 5.500M6.800 6.500l-4 5.500" stroke="#fff" strokeWidth="1.300" />
          </svg>
        </TaskButton>
        <TaskButton label="Screen recorder" className="-ml-1 w-[34px]">
          <svg aria-hidden="true" viewBox="0 0 20 20" className="h-5 w-5">
            <path d="M.5.5h18v18H.5z" fill="#27b0bf" />
            <circle cx="9.500" cy="9.500" r="5.500" fill="#f4ffff" />
            <circle cx="15" cy="15.500" r="4.500" fill="#e01832" />
          </svg>
        </TaskButton>
      </div>
      <div className="ml-auto flex h-full items-center text-[10px]">
        <span>Documents</span>
        <span className="mb-4 ml-1.5 text-[14px] leading-none">»</span>
        <Btn label="Show hidden icons" className="ml-2 w-3.5">
          <svg aria-hidden="true" viewBox="0 0 12 12" className="h-3 w-3" fill="none" stroke="#eee" strokeWidth="1.200"><path d="m1 9 5-5 5 5" /></svg>
        </Btn>
        <svg aria-hidden="true" viewBox="0 0 14 10" className="ml-2 h-2.5 w-3.5"><path d="M3 9a2.500 2.500 0 0 1 0-5 4 4 0 0 1 7-.5A3 3 0 0 1 11.500 9z" fill="#2a8de0" /></svg>
        <svg aria-hidden="true" viewBox="0 0 12 12" className="ml-2 h-3 w-3" fill="none" stroke="#ddd">
          <path d="M1 11C1 5.500 5.500 1 11 1M4 11c0-4 3-7 7-7M7 11c0-2.500 1.500-4 4-4" />
          <circle cx="10" cy="10.500" r=".8" fill="#ddd" />
        </svg>
        <svg aria-hidden="true" viewBox="0 0 14 12" className="ml-1.5 h-3 w-3.5" fill="none" stroke="#eee">
          <path d="M.8 4.500h2L5.500 2v8L2.800 7.500h-2zM8 4.500q1 1.500 0 3M10 3q2 3 0 6M12 1.500q3 4.500 0 9" />
        </svg>
        <span className="ml-2 w-5 text-center leading-[14px]">ENG DV</span>
        <span className="ml-2 w-12 whitespace-nowrap text-center leading-[14px]">10:37 AM<br />3/20/2021</span>
        <Btn label="Notifications" className="ml-3.5 mr-2 w-6">
          <svg aria-hidden="true" viewBox="0 0 22 20" className="h-5 w-[22px]">
            <path d="M1 1h13v11H8l-3.500 3v-3H1z" fill="#fff" />
            <path d="M3.500 4h8M3.500 6.500h8M3.500 9h5" stroke="#1b3434" />
            <circle cx="14.500" cy="13.500" r="6" fill="#26383a" stroke="#aab" />
            <text x="14.500" y="17" textAnchor="middle" fontSize="9" fill="#fff">1</text>
          </svg>
        </Btn>
        <span className="h-full w-1 border-l border-[#48605e]" />
      </div>
    </div>
  );
}

/* ---------- floating recorder ---------- */

function Recorder() {
  return (
    <div className="absolute bottom-[60px] right-1 flex h-[53px] w-[282px] items-center rounded-l-full rounded-r bg-[#130f18] pl-[22px]">
      <Btn label="Stop" className="h-[18px] w-[18px] rounded-sm bg-[#c9c7cb]" />
      <Btn label="Pause" className="ml-4 h-[31px] w-[31px] gap-1 rounded-full bg-[#d51e3c]">
        <span className="h-[13px] w-[3px] rounded-full bg-white" />
        <span className="h-[13px] w-[3px] rounded-full bg-white" />
      </Btn>
      <Btn label="Discard" className="ml-3.5">
        <svg aria-hidden="true" viewBox="0 0 20 20" className="h-5 w-5" stroke="#d3d1d5" strokeWidth="3.500" strokeLinecap="round"><path d="m2.500 2.500 15 15M17.500 2.500l-15 15" /></svg>
      </Btn>
      <span className="ml-2 w-[90px] whitespace-nowrap text-center text-[22px] font-light text-white">00:01:23</span>
      <Btn label="Microphone" className="ml-3">
        <svg aria-hidden="true" viewBox="0 0 14 20" className="h-5 w-3.5" fill="none" stroke="#1fa3b5" strokeWidth="1.400">
          <rect x="4" y="1" width="6" height="11" rx="3" fill="#14606d" />
          <path d="M1 8c0 9 12 9 12 0M7 15v3.500M3.500 18.800h7M4 5h6M4 8h6" />
        </svg>
      </Btn>
      <div className="ml-2 flex h-full flex-col items-center gap-2.5 pt-2">
        <Btn label="Minimize recorder" className="h-px w-3 self-end bg-[#cfcdd2]" />
        <Btn label="Draw">
          <svg aria-hidden="true" viewBox="0 0 16 16" className="h-4 w-4" fill="#d6d4d8"><path d="m1 15 1-4.500L10.500 2l3.500 3.500L5.500 14zM11.300 1.200l1-1 3.500 3.500-1 1z" /></svg>
        </Btn>
      </div>
    </div>
  );
}

export default function App() {
  return (
    <main className="relative flex h-screen flex-col overflow-hidden bg-[#fffeff] font-[Lato,'Open_Sans',sans-serif]">
      <TitleBar />
      <Tabs />
      <Ribbon />
      <FormulaBar />
      <Grid />
      <SheetTabs />
      <StatusBar />
      <Taskbar />
      <Recorder />
      <svg aria-hidden="true" viewBox="0 0 12 12" className="pointer-events-none absolute left-[825px] top-[351px] h-3 w-3">
        <path d="M4 1h4v3h3v4H8v3H4V8H1V4h3z" fill="#fff" stroke="#111" strokeWidth="1.500" />
      </svg>
    </main>
  );
}
